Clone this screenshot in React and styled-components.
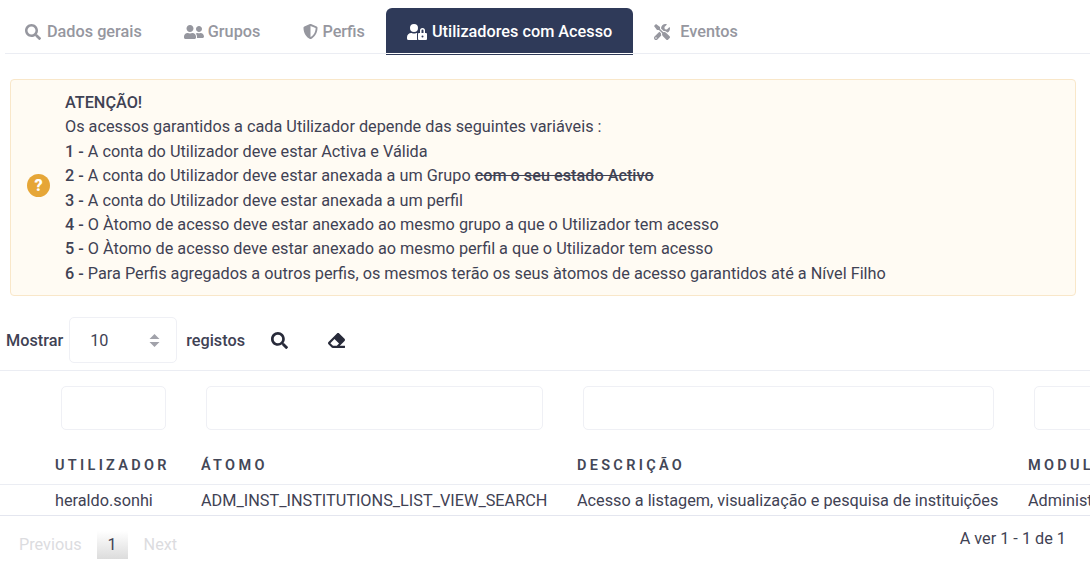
import React from 'react';
import styled, { createGlobalStyle } from 'styled-components';
import { FaSearch, FaUserFriends, FaShieldAlt, FaUserLock, FaTools, FaEraser } from 'react-icons/fa';

const GlobalStyle = createGlobalStyle`
  html, body {
    margin: 0;
    padding: 0;
    background: #fff;
    overflow: hidden;
  }
  body {
    font-family: Roboto, "Liberation Sans", sans-serif;
    font-size: 16.25px;
    color: #3f4254;
  }
`;

const Page = styled.div`
  width: 1090px;
  height: 563px;
  overflow: hidden;
`;

const TabBar = styled.nav`
  display: flex;
  margin: 8px 0 0 5px;
  height: 45px;
  border-bottom: 1px solid #ebedf3;
`;

const Tab = styled.a`
  display: flex;
  align-items: center;
  gap: ${(props) => props.$gap || 5}px;
  box-sizing: border-box;
  height: 45px;
  margin-left: ${(props) => props.$left || 0}px;
  padding: 2px ${(props) => props.$pad || 0}px 0;
  font-size: 16.25px;
  font-weight: 500;
  color: ${(props) => (props.$active ? '#fff' : '#96979f')};
  background: ${(props) => (props.$active ? '#2f3a59' : 'transparent')};
  border-radius: ${(props) => (props.$active ? '6px 6px 0 0' : '0')};
  box-shadow: ${(props) => (props.$active ? '0 1px 0 #fff, 0 2px 0 #2f3a59' : 'none')};
  svg {
    flex: none;
  }
`;

const Alert = styled.section`
  display: flex;
  align-items: center;
  box-sizing: border-box;
  margin: 25px 14px 0 10px;
  height: 217px;
  padding: 0 0 0 16px;
  background: #fffbf3;
  border: 1px solid #f9e7c9;
  border-radius: 4px;
`;

const AlertIcon = styled.span`
  flex: none;
  display: flex;
  align-items: center;
  justify-content: center;
  width: 23px;
  height: 23px;
  margin: 0 15px 5px 0;
  border-radius: 50%;
  background: #e6a637;
  color: #fff;
  font-size: 16px;
  font-weight: 900;
`;

const AlertBody = styled.div`
  padding-top: 2px;
  font-size: 16.25px;
  line-height: 24.375px;
  color: #3f4254;
  b,
  s {
    font-weight: 500;
  }
`;

const Toolbar = styled.div`
  display: flex;
  align-items: center;
  height: 46px;
  margin-top: 21px;
  padding-left: 6px;
  font-size: 16.25px;
  font-weight: 500;
  color: #3f4254;
`;

const PageSize = styled.div`
  display: flex;
  align-items: center;
  justify-content: space-between;
  box-sizing: border-box;
  width: 108px;
  height: 46px;
  margin: 0 9px 0 6px;
  padding: 0 16px 0 20px;
  border: 1px solid #eff0f5;
  border-radius: 5px;
  font-weight: 400;
`;

const SortArrows = styled.svg`
  width: 11px;
  height: 13px;
  fill: #a1a2aa;
`;

const ToolButton = styled.span`
  display: flex;
  margin-left: ${(props) => props.$left}px;
  color: #282b3a;
  svg {
    width: 17px;
    height: 17px;
  }
`;

const Divider = styled.div`
  height: 1px;
  margin-top: 7px;
  background: #ebedf3;
`;

const TableWrap = styled.div`
  width: 1090px;
  overflow: hidden;
`;

const Table = styled.table`
  table-layout: fixed;
  width: 1300px;
  border-collapse: collapse;
`;

const Col = styled.col`
  width: ${(props) => props.$width}px;
`;

const FilterCell = styled.td`
  height: 64px;
  box-sizing: border-box;
  padding: 15px 0 0 0;
  vertical-align: top;
`;

const FilterInput = styled.div`
  box-sizing: border-box;
  height: 44px;
  width: ${(props) => props.$width}px;
  margin-left: ${(props) => props.$left}px;
  border: 1px solid #eff0f5;
  border-radius: 5px;
`;

const HeadCell = styled.th`
  height: 49px;
  padding: 0 0 10px 0;
  box-sizing: border-box;
  border-bottom: 1px solid #ebedf3;
  text-align: left;
  font-size: 14.5px;
  font-weight: 600;
  letter-spacing: 3.3px;
  vertical-align: bottom;
  line-height: 16px;
  white-space: nowrap;
  overflow: hidden;
  color: #434757;
`;

const BodyCell = styled.td`
  height: 31px;
  box-sizing: border-box;
  padding: 2px 0 0;
  border-bottom: 1px solid #e4e6ef;
  font-size: 16.25px;
  white-space: nowrap;
  overflow: hidden;
  color: #3f4254;
`;

const Footer = styled.div`
  display: flex;
  align-items: flex-start;
  justify-content: space-between;
  padding: 11px 24px 0 19px;
`;

const Pager = styled.div`
  display: flex;
  align-items: center;
  height: 28px;
  margin-top: 4px;
  font-size: 16.25px;
  color: #dcdcdf;
`;

const PageNumber = styled.span`
  display: flex;
  align-items: center;
  justify-content: center;
  width: 31px;
  height: 28px;
  margin: 0 16px 0 15px;
  color: #3f4254;
  background: linear-gradient(to bottom, #fff, #dcdcdc);
`;

const PageInfo = styled.div`
  font-size: 16.25px;
  line-height: 24px;
  color: #3f4254;
`;

const rules = [
  ['1', 'A conta do Utilizador deve estar Activa e Válida'],
  ['2', 'A conta do Utilizador deve estar anexada a um Grupo ', 'com o seu estado Activo'],
  ['3', 'A conta do Utilizador deve estar anexada a um perfil'],
  ['4', 'O Àtomo de acesso deve estar anexado ao mesmo grupo a que o Utilizador tem acesso'],
  ['5', 'O Àtomo de acesso deve estar anexado ao mesmo perfil a que o Utilizador tem acesso'],
  ['6', 'Para Perfis agregados a outros perfis, os mesmos terão os seus àtomos de acesso garantidos até a Nível Filho'],
];

export default function App() {
  return (
    <Page>
      <GlobalStyle />
      <TabBar>
        <Tab $left={20} $gap={6}><FaSearch size={16} />Dados gerais</Tab>
        <Tab $left={42} $gap={4}><FaUserFriends size={20} />Grupos</Tab>
        <Tab $left={43} $gap={4}><FaShieldAlt size={15} />Perfis</Tab>
        <Tab $active $left={21} $pad={21} $gap={5}><FaUserLock size={20} />Utilizadores com Acesso</Tab>
        <Tab $left={21} $gap={10}><FaTools size={16} />Eventos</Tab>
      </TabBar>

      <Alert>
        <AlertIcon>?</AlertIcon>
        <AlertBody>
          <div><b>ATENÇÃO!</b></div>
          <div>Os acessos garantidos a cada Utilizador depende das seguintes variáveis :</div>
          {rules.map(([n, text, struck]) => (
            <div key={n}>
              <b>{n} - </b>{text}{struck && <s>{struck}</s>}
            </div>
          ))}
        </AlertBody>
      </Alert>

      <Toolbar>
        Mostrar
        <PageSize>
          10
          <SortArrows viewBox="0 0 11 13">
            <path d="M5.5 0 L10.5 5 H0.5 Z M5.5 13 L0.5 8 H10.5 Z" />
          </SortArrows>
        </PageSize>
        registos
        <ToolButton $left={26}><FaSearch /></ToolButton>
        <ToolButton $left={40}><FaEraser /></ToolButton>
      </Toolbar>
      <Divider />

      <TableWrap>
        <Table>
          <colgroup>
            <Col $width={55} />
            <Col $width={146} />
            <Col $width={376} />
            <Col $width={451} />
            <Col $width={272} />
          </colgroup>
          <tbody>
            <tr>
              <FilterCell />
              <FilterCell><FilterInput $left={6} $width={105} /></FilterCell>
              <FilterCell><FilterInput $left={5} $width={337} /></FilterCell>
              <FilterCell><FilterInput $left={6} $width={411} /></FilterCell>
              <FilterCell><FilterInput $left={6} $width={200} /></FilterCell>
            </tr>
            <tr>
              <HeadCell />
              <HeadCell>UTILIZADOR</HeadCell>
              <HeadCell>ÁTOMO</HeadCell>
              <HeadCell>DESCRIÇÃO</HeadCell>
              <HeadCell>MODULO</HeadCell>
            </tr>
            <tr>
              <BodyCell />
              <BodyCell>heraldo.sonhi</BodyCell>
              <BodyCell>ADM_INST_INSTITUTIONS_LIST_VIEW_SEARCH</BodyCell>
              <BodyCell>Acesso a listagem, visualização e pesquisa de instituições</BodyCell>
              <BodyCell>Administração</BodyCell>
            </tr>
          </tbody>
        </Table>
      </TableWrap>

      <Footer>
        <Pager>
          Previous
          <PageNumber>1</PageNumber>
          Next
        </Pager>
        <PageInfo>A ver 1 - 1 de 1</PageInfo>
      </Footer>
    </Page>
  );
}
